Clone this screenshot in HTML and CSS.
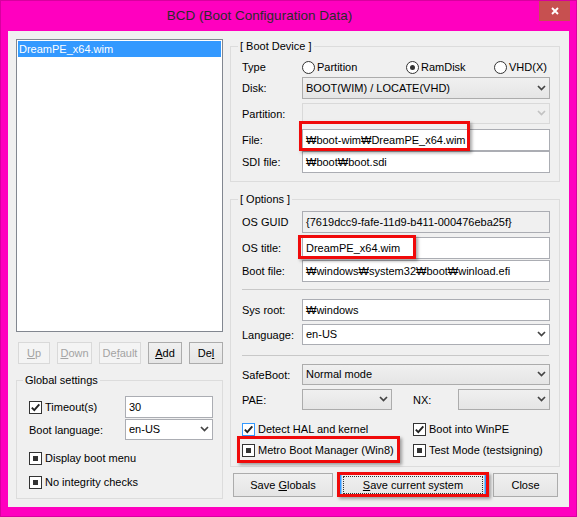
FILE: index.html
```html
<!DOCTYPE html>
<html>
<head>
<meta charset="utf-8">
<title>BCD (Boot Configuration Data)</title>
<link rel="stylesheet" href="styles.css">
</head>
<body>
<div class="window">
  <div class="titlebar">
    <div class="title">BCD (Boot Configuration Data)</div>
    <div class="close-btn"><svg width="8" height="8" viewBox="0 0 8 8"><path d="M1 1L7 7M7 1L1 7" stroke="#fff" stroke-width="1.9" fill="none"/></svg></div>
  </div>
  <div class="client">
    <div class="left-col">
      <div class="listbox">
        <div class="list-item selected">DreamPE_x64.wim</div>
      </div>
      <div class="list-buttons">
        <div class="btn disabled w-up"><span><u>U</u>p</span></div>
        <div class="btn disabled w-down"><span><u>D</u>own</span></div>
        <div class="btn disabled w-default"><span>De<u>f</u>ault</span></div>
        <div class="btn w-add"><span><u>A</u>dd</span></div>
        <div class="btn w-del"><span>De<u>l</u></span></div>
      </div>
      <fieldset class="group global">
        <legend>Global settings</legend>
        <div class="global-body">
          <div class="g-row g-timeout">
            <div class="g-lbl check"><span class="cb"><svg width="11" height="11" viewBox="0 0 11 11"><path d="M1.8 5.6L4.3 8.2L9.3 2.3" stroke="#222" stroke-width="1.9" fill="none"/></svg></span><span>Timeout(s)</span></div>
            <div class="field g-ctl">30</div>
          </div>
          <div class="g-row g-lang">
            <div class="g-lbl">Boot language:</div>
            <div class="combo edit g-ctl"><span>en-US</span><svg class="arrow" width="9" height="6" viewBox="0 0 9 6"><path d="M1 1L4.5 4.5L8 1"/></svg></div>
          </div>
          <div class="g-row g-display">
            <div class="check"><span class="cb indet"></span><span>Display boot menu</span></div>
          </div>
          <div class="g-row g-integ">
            <div class="check"><span class="cb indet"></span><span>No integrity checks</span></div>
          </div>
        </div>
      </fieldset>
    </div>
    <div class="right-col">
      <fieldset class="group boot-device">
        <legend>[ Boot Device ]</legend>
        <div class="fs-body">
          <div class="row r-type">
            <div class="lbl">Type</div>
            <div class="radios">
              <div class="radio"><span class="rb"></span><span>Partition</span></div>
              <div class="radio"><span class="rb on"></span><span>RamDisk</span></div>
              <div class="radio"><span class="rb"></span><span>VHD(X)</span></div>
            </div>
          </div>
          <div class="row r-disk">
            <div class="lbl">Disk:</div>
            <div class="combo ctl"><span>BOOT(WIM) / LOCATE(VHD)</span><svg class="arrow" width="9" height="6" viewBox="0 0 9 6"><path d="M1 1L4.5 4.5L8 1"/></svg></div>
          </div>
          <div class="row r-part">
            <div class="lbl">Partition:</div>
            <div class="combo disabled ctl"><span></span><svg class="arrow" width="9" height="6" viewBox="0 0 9 6"><path d="M1 1L4.5 4.5L8 1"/></svg></div>
          </div>
          <div class="row r-file">
            <div class="lbl">File:</div>
            <div class="field ctl">₩boot-wim₩DreamPE_x64.wim</div>
          </div>
          <div class="row r-sdi">
            <div class="lbl">SDI file:</div>
            <div class="field ctl">₩boot₩boot.sdi</div>
          </div>
        </div>
      </fieldset>
      <fieldset class="group options">
        <legend>[ Options ]</legend>
        <div class="fs-body">
          <div class="row r-guid">
            <div class="lbl">OS GUID</div>
            <div class="field readonly ctl">{7619dcc9-fafe-11d9-b411-000476eba25f}</div>
          </div>
          <div class="row r-title">
            <div class="lbl">OS title:</div>
            <div class="field ctl">DreamPE_x64.wim</div>
          </div>
          <div class="row r-bootfile">
            <div class="lbl">Boot file:</div>
            <div class="field ctl">₩windows₩system32₩boot₩winload.efi</div>
          </div>
          <div class="sep sep-1"></div>
          <div class="row r-sysroot">
            <div class="lbl">Sys root:</div>
            <div class="field ctl">₩windows</div>
          </div>
          <div class="row r-lang">
            <div class="lbl">Language:</div>
            <div class="combo edit ctl"><span>en-US</span><svg class="arrow" width="9" height="6" viewBox="0 0 9 6"><path d="M1 1L4.5 4.5L8 1"/></svg></div>
          </div>
          <div class="sep sep-2"></div>
          <div class="row r-safe">
            <div class="lbl">SafeBoot:</div>
            <div class="combo ctl"><span>Normal mode</span><svg class="arrow" width="9" height="6" viewBox="0 0 9 6"><path d="M1 1L4.5 4.5L8 1"/></svg></div>
          </div>
          <div class="row r-pae">
            <div class="lbl">PAE:</div>
            <div class="combo pae"><span></span><svg class="arrow" width="9" height="6" viewBox="0 0 9 6"><path d="M1 1L4.5 4.5L8 1"/></svg></div>
            <div class="nx-lbl">NX:</div>
            <div class="combo nx"><span></span><svg class="arrow" width="9" height="6" viewBox="0 0 9 6"><path d="M1 1L4.5 4.5L8 1"/></svg></div>
          </div>
          <div class="r-check r-check-1">
            <div class="check"><span class="cb hot"><svg width="11" height="11" viewBox="0 0 11 11"><path d="M1.8 5.6L4.3 8.2L9.3 2.3" stroke="#222" stroke-width="1.9" fill="none"/></svg></span><span>Detect HAL and kernel</span></div>
            <div class="check"><span class="cb"><svg width="11" height="11" viewBox="0 0 11 11"><path d="M1.8 5.6L4.3 8.2L9.3 2.3" stroke="#222" stroke-width="1.9" fill="none"/></svg></span><span>Boot into WinPE</span></div>
          </div>
          <div class="r-check r-check-2">
            <div class="check"><span class="cb indet"></span><span>Metro Boot Manager (Win8)</span></div>
            <div class="check"><span class="cb indet"></span><span>Test Mode (testsigning)</span></div>
          </div>
        </div>
      </fieldset>
      <div class="actions">
        <div class="btn w-saveg"><span>Save <u>G</u>lobals</span></div>
        <div class="btn default w-savec"><span><u>S</u>ave current system</span></div>
        <div class="btn w-close"><span>Close</span></div>
      </div>
    </div>
  </div>
  <div class="highlight hl-file"></div>
  <div class="highlight hl-title"></div>
  <div class="highlight hl-metro"></div>
  <div class="highlight hl-save"></div>
</div>
</body>
</html>
```

FILE: styles.css
```css
html, body {
  margin: 0;
  padding: 0;
}
body {
  font-family: "Liberation Sans", Arial, sans-serif;
  font-size: 11px;
  color: #000;
  background: #ff00bf;
}
.window {
  position: relative;
  width: 577px;
  height: 517px;
  background: #ff00bf;
  box-shadow: inset 0 0 0 1px #d8009f;
  display: flex;
  flex-direction: column;
}
.titlebar {
  height: 31px;
  display: flex;
  flex-shrink: 0;
}
.title {
  flex: 1;
  padding-right: 20px;
  text-align: center;
  line-height: 31px;
  font-size: 13.5px;
  color: #2b2b2b;
}
.close-btn {
  width: 31px;
  height: 20px;
  margin: 1px 7px 0 0;
  background: #c75050;
  display: flex;
  align-items: center;
  justify-content: center;
}
.client {
  margin: 0 8px;
  height: 476px;
  background: #f0f0f0;
  display: flex;
  gap: 7px;
  padding: 0 9px 0 8px;
}
.left-col {
  width: 207px;
  padding-top: 8px;
  display: flex;
  flex-direction: column;
}
.listbox {
  height: 293px;
  box-sizing: border-box;
  border: 1px solid #828790;
  background: #fff;
  padding: 1px;
}
.list-item {
  height: 16px;
  line-height: 16px;
  padding-left: 1px;
}
.list-item.selected {
  background: #3399ff;
  color: #fff;
}
.list-buttons {
  display: flex;
  gap: 7px;
  margin-top: 10px;
  padding-left: 2px;
}
.btn {
  height: 22px;
  box-sizing: border-box;
  border: 1px solid #acacac;
  background: linear-gradient(#f0f0f0, #e5e5e5);
  display: flex;
  align-items: center;
  justify-content: center;
  white-space: nowrap;
}
.btn.disabled {
  border-color: #d9d9d9;
  background: #f4f4f4;
  color: #a3a3a3;
}
.w-up { width: 32px; }
.w-down { width: 35px; }
.w-default { width: 42px; }
.w-add { width: 34px; }
.w-del { width: 34px; }

fieldset.group {
  margin: 0;
  padding: 0;
  border: 1px solid #dcdcdc;
  min-width: 0;
}
fieldset.group legend {
  padding: 0 2px;
  margin-left: 7px;
  height: 16px;
  line-height: 16px;
}
fieldset.global {
  margin-top: 8px;
}
fieldset.global legend {
  margin-left: 6px;
}
.global-body {
  padding: 8px 9px 8px 12px;
}
.g-row {
  display: flex;
  align-items: center;
}
.g-lbl {
  width: 96px;
  flex-shrink: 0;
}
.g-ctl {
  flex: 1;
}
.g-timeout { height: 22px; }
.g-timeout .field { height: 22px; }
.g-lang { height: 21px; margin-top: 1px; }
.g-lang .combo { height: 21px; }
.g-display { height: 16px; margin-top: 10px; }
.g-integ { height: 16px; margin-top: 8px; }

.check {
  display: flex;
  align-items: center;
  gap: 3px;
  white-space: nowrap;
}
.cb {
  width: 13px;
  height: 13px;
  box-sizing: border-box;
  border: 1px solid #333;
  background: #fff;
  display: flex;
  align-items: center;
  justify-content: center;
  flex-shrink: 0;
}
.cb.hot {
  border-color: #3399ff;
}
.cb.indet::after {
  content: "";
  width: 5px;
  height: 5px;
  background: #333;
}
.radios {
  display: grid;
  grid-template-columns: 104px 88px 1fr;
}
.radio {
  display: flex;
  align-items: center;
  gap: 2px;
  white-space: nowrap;
}
.rb {
  width: 13px;
  height: 13px;
  box-sizing: border-box;
  border: 1px solid #333;
  border-radius: 50%;
  background: #fff;
  display: flex;
  align-items: center;
  justify-content: center;
}
.rb.on::after {
  content: "";
  width: 5px;
  height: 5px;
  border-radius: 50%;
  background: #333;
}
.field {
  height: 22px;
  box-sizing: border-box;
  border: 1px solid #abadb3;
  background: #fff;
  padding: 0 3px 1px;
  display: flex;
  align-items: center;
  white-space: nowrap;
  overflow: hidden;
}
.field.readonly {
  background: #f0f0f0;
}
.combo {
  height: 21px;
  box-sizing: border-box;
  border: 1px solid #acacac;
  background: linear-gradient(#f0f0f0, #e5e5e5);
  padding: 0 3px 1px;
  display: flex;
  align-items: center;
  justify-content: space-between;
  white-space: nowrap;
  color: #000;
}
.combo.edit {
  background: #fff;
  border-color: #abadb3;
}
.combo.disabled {
  background: #efefef;
  border-color: #d9d9d9;
}
.arrow path {
  fill: none;
  stroke: #444;
  stroke-width: 1.7;
}
.combo.disabled .arrow path {
  stroke: #c2c2c2;
}
.right-col {
  width: 330px;
  display: flex;
  flex-direction: column;
}
fieldset.boot-device {
  margin-top: 7px;
}
fieldset.options {
  margin-top: 9px;
}
.fs-body {
  padding: 0 9px 8px 11px;
}
.row {
  display: flex;
  align-items: center;
}
.lbl {
  width: 60px;
  flex-shrink: 0;
  white-space: nowrap;
}
.ctl {
  flex: 1;
}
.r-type { height: 20px; margin-top: 3px; }
.r-disk { height: 22px; }
.r-disk .combo { height: 22px; }
.r-part { height: 21px; margin-top: 4px; }
.r-file { height: 22px; margin-top: 5px; }
.r-sdi { height: 22px; }
.r-guid { height: 22px; margin-top: 4px; }
.r-title { height: 22px; margin-top: 4px; }
.r-bootfile { height: 22px; margin-top: 1px; }
.sep {
  height: 0;
  border-top: 1px solid #c8c8c8;
  margin-right: 1px;
}
.sep-1 { margin-top: 7px; }
.r-sysroot { height: 22px; margin-top: 9px; }
.r-lang { height: 21px; margin-top: 3px; }
.sep-2 { margin-top: 10px; }
.r-safe { height: 21px; margin-top: 8px; }
.r-pae { height: 21px; margin-top: 4px; }
.pae { width: 90px; }
.nx-lbl { width: 45px; margin-left: 21px; }
.nx { width: 92px; }
.r-check {
  display: grid;
  grid-template-columns: 171px 1fr;
  align-items: center;
  height: 16px;
}
.r-check-1 { margin-top: 11px; }
.r-check-2 { margin-top: 5px; }
.actions {
  display: flex;
  gap: 7px;
  margin-top: 6px;
  padding-left: 3px;
}
.actions .btn {
  height: 24px;
}
.w-saveg { width: 100px; }
.w-savec { width: 146px; }
.w-close { width: 65px; }
.btn.default {
  position: relative;
  border-color: #3399ff;
  box-shadow: inset 0 0 0 1px #8cc4fb;
}
.btn.default::after {
  content: "";
  position: absolute;
  inset: 2px;
  border: 1px dotted #333;
}
.highlight {
  position: absolute;
  box-sizing: border-box;
  border: 3px solid #f00a0a;
  box-shadow: 2px 2px 3px rgba(0, 0, 0, 0.35);
}
.hl-file { left: 299px; top: 121px; width: 171px; height: 30px; }
.hl-title { left: 298px; top: 235px; width: 118px; height: 24px; }
.hl-metro { left: 237px; top: 436px; width: 163px; height: 27px; }
.hl-save { left: 337px; top: 472px; width: 152px; height: 25px; }
```
